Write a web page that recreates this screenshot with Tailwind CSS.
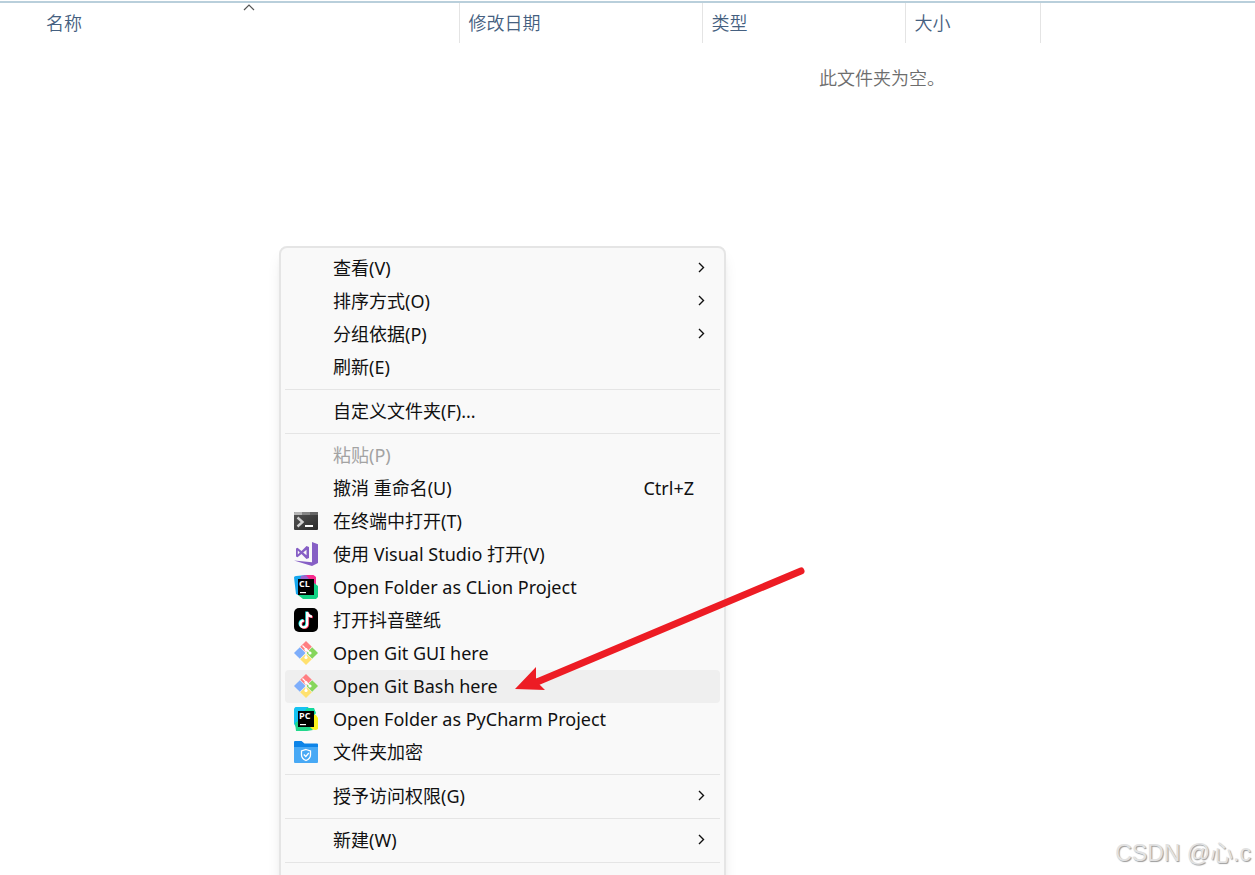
<!DOCTYPE html>
<html lang="zh-CN">

<head>
  <meta charset="UTF-8">
  <meta name="viewport" content="width=device-width, initial-scale=1.0">
  <title>文件夹</title>
  <script src="https://cdn.jsdelivr.net/npm/@tailwindcss/browser@4"></script>
</head>

<body class="bg-white font-['Noto_Sans','Noto_Sans_CJK_SC',sans-serif] text-[18px] leading-6 text-[#111]">
  <main class="relative h-screen overflow-hidden pt-px">
    <table class="w-full table-fixed border-t-2 border-[#b9cfdb] text-left text-[#456080]">
      <thead>
        <tr class="h-[41px]">
          <th class="relative w-[459px] border-r border-[#e4e4e4] pl-[46px] font-[350]">
            名称
            <svg class="absolute top-0 left-[243px] h-2 w-3" viewBox="0 0 12 8" fill="none" stroke="#555" stroke-width="1.2"><path d="M1 7l5-5 5 5"/></svg>
          </th>
          <th class="w-[243px] border-r border-[#e4e4e4] pl-[9px] font-[350]">修改日期</th>
          <th class="w-[203px] border-r border-[#e4e4e4] pl-[9px] font-[350]">类型</th>
          <th class="w-[135px] border-r border-[#e4e4e4] pl-[9px] font-[350]">大小</th>
          <td></td>
        </tr>
      </thead>
    </table>

    <p class="mt-[23px] pl-[509px] text-center font-[350] text-[#6d6d6d]">此文件夹为空。</p>

    <!-- context menu -->
    <div role="menu" class="absolute top-[246px] left-[279px] w-[447px] rounded-lg border-2 border-[#e5e5e5] bg-[#f9f9f9] p-1 pb-20 shadow-lg shadow-black/10">
      <button role="menuitem" class="flex h-[33px] w-full items-center rounded pr-[15px] pb-0.5 pl-12 text-left">
        <span class="flex-1">查看(V)</span>
        <svg class="h-3 w-2" viewBox="0 0 8 12" fill="none" stroke="#111" stroke-width="1.4"><path d="M2 1l4.500 4.500L2 10"/></svg>
      </button>
      <button role="menuitem" class="flex h-[33px] w-full items-center rounded pr-[15px] pb-0.5 pl-12 text-left">
        <span class="flex-1">排序方式(O)</span>
        <svg class="h-3 w-2" viewBox="0 0 8 12" fill="none" stroke="#111" stroke-width="1.4"><path d="M2 1l4.500 4.500L2 10"/></svg>
      </button>
      <button role="menuitem" class="flex h-[33px] w-full items-center rounded pr-[15px] pb-0.5 pl-12 text-left">
        <span class="flex-1">分组依据(P)</span>
        <svg class="h-3 w-2" viewBox="0 0 8 12" fill="none" stroke="#111" stroke-width="1.4"><path d="M2 1l4.500 4.500L2 10"/></svg>
      </button>
      <button role="menuitem" class="flex h-[33px] w-full items-center rounded pb-0.5 pl-12 text-left">刷新(E)</button>
      <hr class="my-[5px] border-[#e5e5e5]">
      <button role="menuitem" class="flex h-[33px] w-full items-center rounded pb-0.5 pl-12 text-left">自定义文件夹(F)...</button>
      <hr class="my-[5px] border-[#e5e5e5]">
      <button role="menuitem" disabled class="flex h-[33px] w-full items-center rounded pb-0.5 pl-12 text-left text-[#a3a3a3]">粘贴(P)</button>
      <button role="menuitem" class="flex h-[33px] w-full items-center rounded pr-[26px] pb-0.5 pl-12 text-left">
        <span class="flex-1">撤消 重命名(U)</span>
        <span>Ctrl+Z</span>
      </button>
      <button role="menuitem" class="flex h-[33px] w-full items-center gap-[15px] rounded pb-0.5 pl-[9px] text-left">
        <svg class="size-6" viewBox="0 0 24 24">
          <defs><linearGradient id="term" x1="0" y1="0" x2="1" y2="1"><stop stop-color="#555"/><stop offset="1" stop-color="#2b2b2b"/></linearGradient></defs>
          <rect y="3" width="24" height="18" rx="1" fill="url(#term)"/>
          <path d="M0 6V4q0-1 1-1h7v3z" fill="#b5b5b5"/><path d="M8 3h8v3H8z" fill="#858585"/><path d="M16 3h7q1 0 1 1v2h-8z" fill="#666"/>
          <path d="M3.500 8.500l5 4.500-5 4.500" fill="none" stroke="#d0d0d0" stroke-width="2.400"/>
          <path d="M11 16h8v2h-8z" fill="#fff"/>
        </svg>
        在终端中打开(T)
      </button>
      <button role="menuitem" class="flex h-[33px] w-full items-center gap-[15px] rounded pb-0.5 pl-[9px] text-left">
        <svg class="size-6" viewBox="0 0 24 24" fill="#865fc5">
          <path d="M18 0l6 2.200v18.800L18 24 0 18.500l18 1.700z"/>
          <path fill-rule="evenodd" d="M2 6.500l1.500-.8 4 3.200 5-5L15 5v11l-2.500 1-5-5-4 3.200L2 14.500zM3.800 8.500v4l2-2zM12.500 7.700L9.200 10.500l3.300 2.800z"/>
        </svg>
        使用 Visual Studio 打开(V)
      </button>
      <button role="menuitem" class="flex h-[33px] w-full items-center gap-[15px] rounded pb-0.5 pl-[9px] text-left">
        <svg class="size-6" viewBox="0 0 24 24">
          <path d="M0 2.500Q0 1 2 1L13 0l3 12L4 20 2 19z" fill="#16a7ee"/>
          <path d="M11 0h8.500L22 2v9l-6 2-9-9z" fill="#f52a8d"/><path d="M7 1l5-1 3 4-9 1z" fill="#9b66cf"/>
          <path d="M20 8l4 3v11l-2 2H9l-5-4z" fill="#12d285"/>
          <path d="M4 4h16v16H4z"/>
          <text x="5" y="12" fill="#fff" font-family="Open Sans, sans-serif" font-size="9" font-weight="700">CL</text>
          <path d="M6 17h6v1.200H6z" fill="#fff"/>
        </svg>
        Open Folder as CLion Project
      </button>
      <button role="menuitem" class="flex h-[33px] w-full items-center gap-[15px] rounded pb-0.5 pl-[9px] text-left">
        <svg class="size-6" viewBox="0 0 24 24" fill="none" stroke-width="2.300">
          <rect width="24" height="24" rx="5" fill="#000"/>
          <path d="M12.400 3.500v12a3.400 3.400 0 1 1-3.400-3.400M12.400 3.500q.5 4.200 4.800 4.700" stroke="#25f4ee"/>
          <path d="M14 4.500v12a3.400 3.400 0 1 1-3.400-3.400M14 4.500q.5 4.200 4.800 4.700" stroke="#fe2c55"/>
          <path d="M13.200 4v12a3.400 3.400 0 1 1-3.400-3.400M13.200 4q.5 4.200 4.800 4.700" stroke="#fff"/>
        </svg>
        打开抖音壁纸
      </button>
      <button role="menuitem" class="flex h-[33px] w-full items-center gap-[15px] rounded pb-0.5 pl-[9px] text-left">
        <svg class="size-6" viewBox="0 0 24 24">
          <path d="M12 0l5.800 5.800-5.800 5.800-5.800-5.800z" fill="#ff7f82"/>
          <path d="M5.800 6.200L11.600 12l-5.800 5.800L0 12z" fill="#7eaefb"/>
          <path d="M18.200 6.200L24 12l-5.800 5.800L12.400 12z" fill="#86d65b"/>
          <path d="M12 12.400l5.800 5.800L12 24l-5.800-5.800z" fill="#ffe16f"/>
          <path d="M8.500 4.500L12 8v9M12 8l4.500 4.500" fill="none" stroke="#fff" stroke-width="1.200"/>
          <g fill="#fff"><circle cx="12" cy="8.500" r="1.600"/><circle cx="12" cy="16.500" r="1.600"/><circle cx="16" cy="12" r="1.600"/></g>
        </svg>
        Open Git GUI here
      </button>
      <button role="menuitem" class="flex h-[33px] w-full items-center gap-[15px] rounded bg-[#efefef] pb-0.5 pl-[9px] text-left">
        <svg class="size-6" viewBox="0 0 24 24">
          <path d="M12 0l5.800 5.800-5.800 5.800-5.800-5.800z" fill="#ff7f82"/>
          <path d="M5.800 6.200L11.600 12l-5.800 5.800L0 12z" fill="#7eaefb"/>
          <path d="M18.200 6.200L24 12l-5.800 5.800L12.400 12z" fill="#86d65b"/>
          <path d="M12 12.400l5.800 5.800L12 24l-5.800-5.800z" fill="#ffe16f"/>
          <path d="M8.500 4.500L12 8v9M12 8l4.500 4.500" fill="none" stroke="#fff" stroke-width="1.200"/>
          <g fill="#fff"><circle cx="12" cy="8.500" r="1.600"/><circle cx="12" cy="16.500" r="1.600"/><circle cx="16" cy="12" r="1.600"/></g>
        </svg>
        Open Git Bash here
      </button>
      <button role="menuitem" class="flex h-[33px] w-full items-center gap-[15px] rounded pb-0.5 pl-[9px] text-left">
        <svg class="size-6" viewBox="0 0 24 24">
          <path d="M0 1.500L1.500 0H14l3 6-10 12-5 2-2-3z" fill="#16c2f2"/>
          <path d="M13 1h7l2 5-4 6-9-6z" fill="#12d99b"/>
          <path d="M18 7l4 1 2 3v11l-2 1-10-1z" fill="#fcf31c"/>
          <path d="M1 16l3-2 12 6 3 3-6 1H2z" fill="#22d78c"/>
          <path d="M4 4h16v16H4z"/>
          <text x="5" y="12" fill="#fff" font-family="Open Sans, sans-serif" font-size="9" font-weight="700">PC</text>
          <path d="M6 17h6v1.200H6z" fill="#fff"/>
        </svg>
        Open Folder as PyCharm Project
      </button>
      <button role="menuitem" class="flex h-[33px] w-full items-center gap-[15px] rounded pb-0.5 pl-[9px] text-left">
        <svg class="size-6" viewBox="0 0 24 24">
          <path d="M0 2q0-1 1-1h6.500l3 2.500H23q1 0 1 1V9H0z" fill="#0d84e8"/>
          <path d="M0 7h24v15q0 1-1 1H1q-1 0-1-1z" fill="#48a9f5"/>
          <path d="M12 9.500l4.500 1.500v4q0 3.500-4.500 5.500-4.500-2-4.500-5.500v-4zM9.800 14.500l2 2 3-3.500" fill="none" stroke="#fff" stroke-width="1.300"/>
        </svg>
        文件夹加密
      </button>
      <hr class="my-[5px] border-[#e5e5e5]">
      <button role="menuitem" class="flex h-[33px] w-full items-center rounded pr-[15px] pb-0.5 pl-12 text-left">
        <span class="flex-1">授予访问权限(G)</span>
        <svg class="h-3 w-2" viewBox="0 0 8 12" fill="none" stroke="#111" stroke-width="1.4"><path d="M2 1l4.500 4.500L2 10"/></svg>
      </button>
      <hr class="my-[5px] border-[#e5e5e5]">
      <button role="menuitem" class="flex h-[33px] w-full items-center rounded pr-[15px] pb-0.5 pl-12 text-left">
        <span class="flex-1">新建(W)</span>
        <svg class="h-3 w-2" viewBox="0 0 8 12" fill="none" stroke="#111" stroke-width="1.4"><path d="M2 1l4.500 4.500L2 10"/></svg>
      </button>
      <hr class="my-[5px] border-[#e5e5e5]">
    </div>

    <!-- arrow pointing at Git Bash -->
    <svg class="pointer-events-none absolute top-[560px] left-[510px] h-[140px] w-[300px]" viewBox="0 0 300 140" fill="#ed1c24">
      <path d="M291 11L27 122" stroke="#ed1c24" stroke-width="7" stroke-linecap="round"/>
      <path d="M5 129l21-22v11l3 6 6 6z"/>
    </svg>

    <div class="absolute right-1 bottom-1 font-['Liberation_Sans','Noto_Sans_CJK_SC',sans-serif] text-[23px] leading-9 whitespace-nowrap text-[#e2e2e2] [text-shadow:1px_1px_1px_#999]">CSDN @心.c</div>
  </main>
</body>

</html>
